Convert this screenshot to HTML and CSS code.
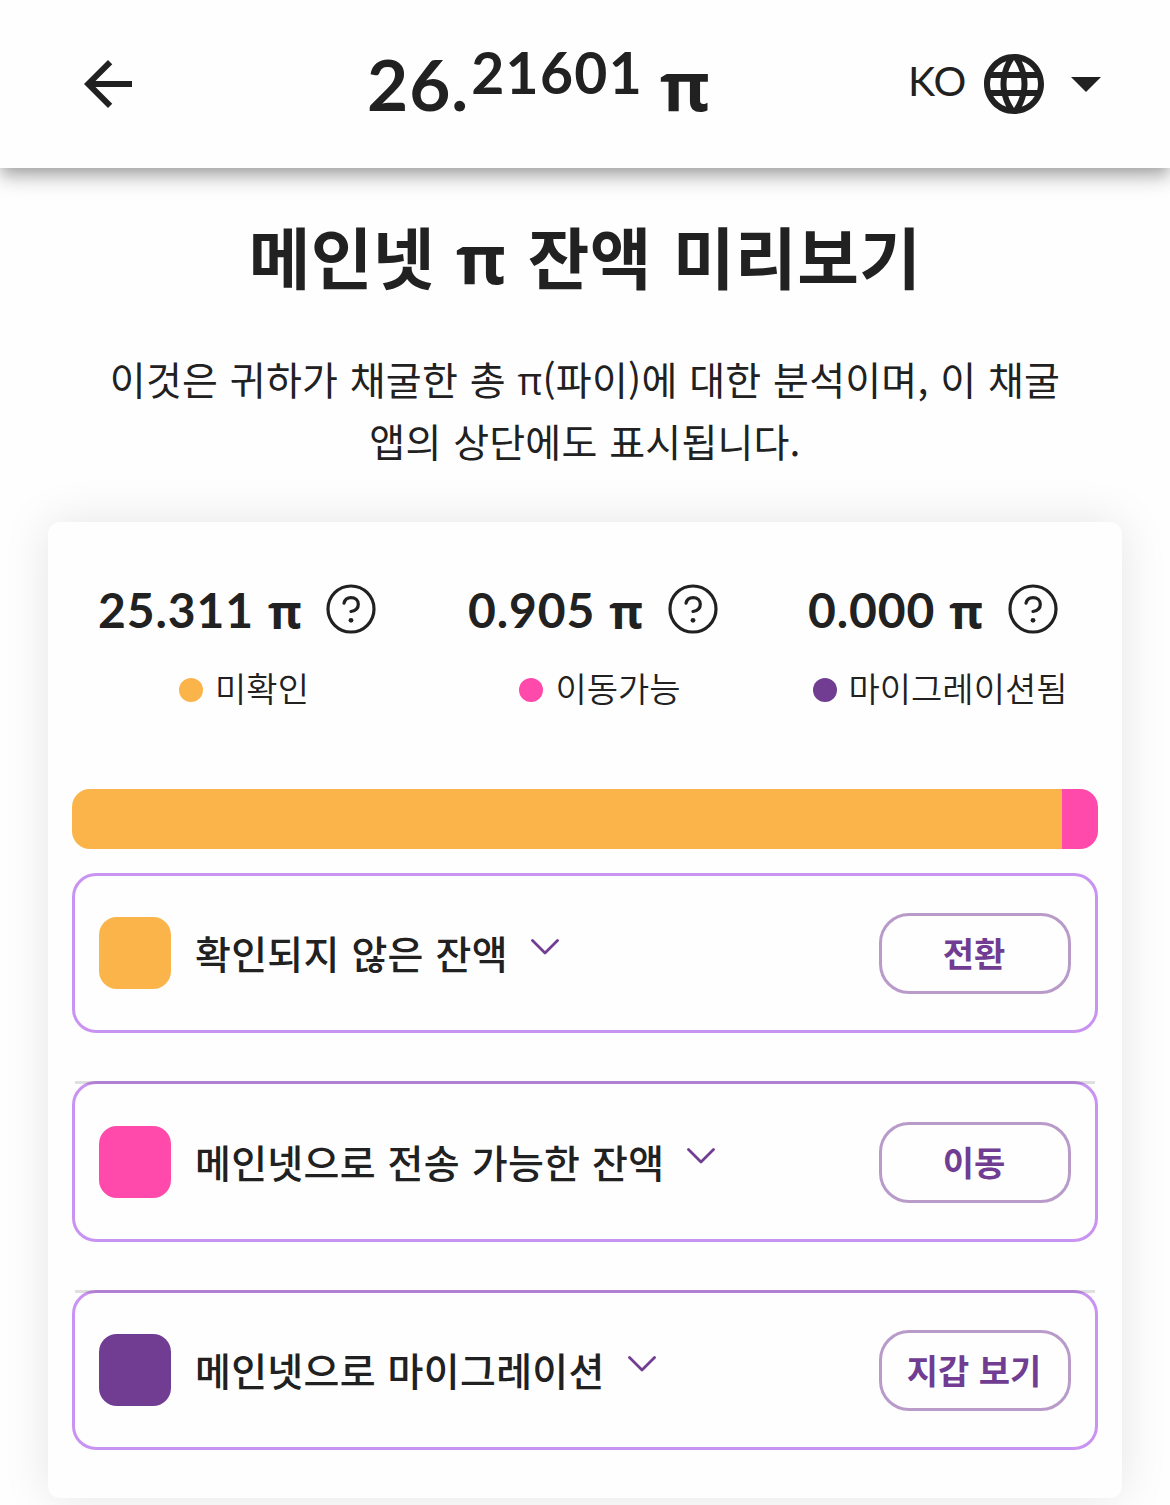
FILE: index.html
```
<!DOCTYPE html>
<html lang="ko">

<head>
    <meta charset="UTF-8">
    <meta name="viewport" content="width=device-width, initial-scale=1.0">
    <title>메인넷 π 잔액 미리보기</title>
    <link rel="stylesheet" href="styles.css">
</head>

<body>
    <header class="header">
        <svg class="back" viewBox="4 4 16 16">
            <path d="M20 11H7.83l5.59-5.59L12 4l-8 8 8 8 1.41-1.41L7.83 13H20v-2z" />
        </svg>
        <div class="balance">
            <span class="int">26.</span><span class="dec">21601</span><span class="pi">π</span>
        </div>
        <div class="lang">
            <span class="lang-name">KO</span>
            <svg class="globe" viewBox="2 2 20 20">
                <path d="M11.99 2C6.47 2 2 6.48 2 12s4.47 10 9.99 10C17.52 22 22 17.52 22 12S17.52 2 11.99 2zm6.93 6h-2.95c-.32-1.25-.78-2.45-1.38-3.56 1.84.63 3.37 1.91 4.33 3.56zM12 4.04c.83 1.2 1.48 2.53 1.91 3.96h-3.82c.43-1.43 1.08-2.76 1.91-3.96zM4.26 14C4.1 13.36 4 12.69 4 12s.1-1.36.26-2h3.38c-.08.66-.14 1.32-.14 2s.06 1.34.14 2H4.26zm.82 2h2.95c.32 1.25.78 2.45 1.38 3.56-1.84-.63-3.37-1.9-4.33-3.56zm2.95-8H5.08c.96-1.66 2.49-2.93 4.33-3.56C8.81 5.55 8.35 6.75 8.03 8zM12 19.96c-.83-1.2-1.48-2.53-1.91-3.96h3.82c-.43 1.43-1.08 2.76-1.91 3.96zM14.34 14H9.66c-.09-.66-.16-1.32-.16-2s.07-1.35.16-2h4.68c.09.65.16 1.32.16 2s-.07 1.34-.16 2zm.25 5.56c.6-1.11 1.06-2.31 1.38-3.56h2.95c-.96 1.65-2.49 2.93-4.33 3.56zM16.36 14c.08-.66.14-1.32.14-2s-.06-1.34-.14-2h3.38c.16.64.26 1.31.26 2s-.1 1.36-.26 2h-3.38z" />
            </svg>
            <svg class="caret" viewBox="0 0 10 5">
                <path d="M0 0l5 5 5-5z" />
            </svg>
        </div>
    </header>

    <main class="main">
        <h1 class="title">메인넷 <span class="pi">π</span> 잔액 미리보기</h1>
        <p class="desc">
            <span class="line1">이것은 귀하가 채굴한 총 <span class="pi">π</span>(파이)에 대한 분석이며, 이 채굴</span><br>
            <span class="line2">앱의 상단에도 표시됩니다.</span>
        </p>

        <section class="card">
            <div class="stats">
                <div class="stat">
                    <div class="value">
                        <span class="num">25.311</span><span class="pi">π</span>
                        <svg class="help" viewBox="0 0 50 50">
                            <circle cx="25" cy="25" r="23" />
                            <path d="M18 19.2C18.8 15.6 21.5 13.6 25 13.6c4.4 0 7.3 2.9 7.3 6.7 0 4-3 6.5-7.3 7.2" />
                            <circle class="dot" cx="25" cy="36.3" r="2.4" />
                        </svg>
                    </div>
                    <div class="legend"><i class="bullet orange"></i>미확인</div>
                </div>
                <div class="stat">
                    <div class="value">
                        <span class="num">0.905</span><span class="pi">π</span>
                        <svg class="help" viewBox="0 0 50 50">
                            <circle cx="25" cy="25" r="23" />
                            <path d="M18 19.2C18.8 15.6 21.5 13.6 25 13.6c4.4 0 7.3 2.9 7.3 6.7 0 4-3 6.5-7.3 7.2" />
                            <circle class="dot" cx="25" cy="36.3" r="2.4" />
                        </svg>
                    </div>
                    <div class="legend"><i class="bullet pink"></i>이동가능</div>
                </div>
                <div class="stat">
                    <div class="value">
                        <span class="num">0.000</span><span class="pi">π</span>
                        <svg class="help" viewBox="0 0 50 50">
                            <circle cx="25" cy="25" r="23" />
                            <path d="M18 19.2C18.8 15.6 21.5 13.6 25 13.6c4.4 0 7.3 2.9 7.3 6.7 0 4-3 6.5-7.3 7.2" />
                            <circle class="dot" cx="25" cy="36.3" r="2.4" />
                        </svg>
                    </div>
                    <div class="legend"><i class="bullet purple"></i>마이그레이션됨</div>
                </div>
            </div>

            <div class="bar">
                <div class="part orange" style="width: 96.53%"></div>
                <div class="part pink" style="width: 3.47%"></div>
            </div>

            <div class="row">
                <i class="square orange"></i>
                <span class="name">확인되지 않은 잔액</span>
                <svg class="chevron" viewBox="0 0 28 16">
                    <path d="M1.5 1.5L14 14 26.5 1.5" />
                </svg>
                <button class="btn">전환</button>
            </div>
            <div class="row">
                <i class="square pink"></i>
                <span class="name">메인넷으로 전송 가능한 잔액</span>
                <svg class="chevron" viewBox="0 0 28 16">
                    <path d="M1.5 1.5L14 14 26.5 1.5" />
                </svg>
                <button class="btn">이동</button>
            </div>
            <div class="row">
                <i class="square purple"></i>
                <span class="name">메인넷으로 마이그레이션</span>
                <svg class="chevron" viewBox="0 0 28 16">
                    <path d="M1.5 1.5L14 14 26.5 1.5" />
                </svg>
                <button class="btn">지갑 보기</button>
            </div>
        </section>
    </main>
</body>

</html>
```
FILE: styles.css
```
* {
    box-sizing: border-box;
    margin: 0;
    padding: 0;
}

body {
    height: 1505px;
    overflow: hidden;
    background: #fefefe;
    color: #212121;
    font-family: "Noto Sans CJK KR", sans-serif;
}

svg {
    display: block;
    flex: none;
}

.orange {
    background: #fbb44a;
}

.pink {
    background: #ff4aab;
}

.purple {
    background: #703d92;
}

.pi {
    font-family: "Open Sans", sans-serif;
}

/* 상단 바 */
.header {
    position: relative;
    display: flex;
    align-items: center;
    justify-content: space-between;
    height: 168px;
    padding: 0 69px 0 84px;
    background: #fefefe;
    box-shadow: 0 6px 12px -3px rgba(0, 0, 0, 0.2), 0 12px 15px 0 rgba(0, 0, 0, 0.14), 0 3px 30px 0 rgba(0, 0, 0, 0.12);
}

.back {
    width: 48px;
    height: 48px;
    fill: #212121;
}

.balance {
    display: flex;
    align-items: baseline;
    width: 340px;
    margin-left: 34px;
    font-family: Lato, sans-serif;
    font-size: 71px;
    font-weight: 700;
    line-height: 80px;
    white-space: nowrap;
}

.int {
    letter-spacing: 1px;
}

.dec {
    margin-left: 2px;
    font-size: 57px;
    letter-spacing: 1.3px;
    line-height: 1;
    position: relative;
    top: -17px;
}

.balance .pi {
    margin-left: 17px;
    font-size: 68px;
    line-height: 1;
}

.lang {
    display: flex;
    align-items: center;
}

.lang-name {
    width: 76px;
    font-family: Lato, sans-serif;
    font-size: 41px;
    line-height: 50px;
    padding-bottom: 6px;
}

.globe {
    width: 60px;
    height: 60px;
    fill: #212121;
}

.caret {
    width: 30px;
    height: 15px;
    margin-left: 27px;
    fill: #212121;
}

/* 본문 */
.main {
    padding: 39px 48px 0;
}

.title {
    height: 96px;
    font-size: 67px;
    font-weight: 700;
    line-height: 96px;
    letter-spacing: 0.4px;
    word-spacing: 2px;
    text-align: center;
    white-space: nowrap;
}

.title .pi {
    font-size: 68px;
    line-height: 1;
}

.desc {
    height: 124px;
    margin-top: 44px;
    font-size: 39px;
    line-height: 62px;
    letter-spacing: 0.2px;
    word-spacing: 0.6px;
    text-align: center;
    white-space: nowrap;
}

.desc .pi {
    font-size: 38px;
    font-weight: 500;
    line-height: 1;
}

.card {
    height: 976px;
    margin-top: 51px;
    padding: 60px 24px 0;
    border-radius: 12px;
    background: #fefefe;
    box-shadow: 0 0 48px rgba(0, 0, 0, 0.1);
}

.stats {
    display: grid;
    grid-template-columns: 292px 264px 264px;
    column-gap: 76px;
    height: 207px;
    padding-left: 26px;
}

.stat + .stat {
    padding-left: 2px;
    margin-right: -2px;
}

.value {
    display: flex;
    align-items: center;
    height: 54px;
    padding-right: 14px;
    font-size: 48px;
    font-weight: 700;
    line-height: 54px;
}

.num {
    font-family: Lato, sans-serif;
    letter-spacing: 0.9px;
    padding-top: 2px;
}

.value .pi {
    margin-left: 14px;
    padding-top: 3px;
    font-size: 46px;
}

.help {
    width: 50px;
    height: 50px;
    margin-left: auto;
    fill: none;
    stroke: #212121;
    stroke-width: 3.2;
    stroke-linecap: round;
}

.help .dot {
    fill: #212121;
    stroke: none;
}

.legend {
    display: flex;
    align-items: center;
    justify-content: center;
    gap: 12px;
    height: 50px;
    margin-top: 26px;
    font-size: 34px;
    font-weight: 350;
    white-space: nowrap;
}

.bullet {
    flex: none;
    width: 24px;
    height: 24px;
    margin-top: 6px;
    border-radius: 50%;
}

.bar {
    display: flex;
    height: 60px;
    border-radius: 18px;
    overflow: hidden;
}

.row {
    position: relative;
    display: flex;
    align-items: center;
    height: 160px;
    margin-top: 24px;
    padding: 0 24px;
    border: 3px solid #c993f1;
    border-radius: 24px;
}

.row + .row {
    height: 161px;
    margin-top: 48px;
    padding-top: 1px;
}

.row + .row + .row {
    height: 160px;
    padding-top: 0;
}

/* 항목 사이 구분선 */
.row + .row::before {
    content: "";
    position: absolute;
    top: -3px;
    left: 0;
    right: 0;
    height: 3px;
    background: rgba(0, 0, 0, 0.12);
}

.square {
    flex: none;
    width: 72px;
    height: 72px;
    border-radius: 18px;
}

.name {
    margin-left: 24px;
    padding-bottom: 2px;
    font-size: 39px;
    font-weight: 500;
    line-height: 60px;
    letter-spacing: 0.3px;
    word-spacing: 0.5px;
    white-space: nowrap;
}

.chevron {
    width: 28px;
    height: 16px;
    margin: 0 0 12px 23px;
    fill: none;
    stroke: #703d92;
    stroke-width: 2.8;
    stroke-linecap: round;
    stroke-linejoin: round;
}

.btn {
    width: 192px;
    height: 81px;
    margin-left: auto;
    padding: 0 2px 2px 0;
    border: 3px solid #b89bc8;
    border-radius: 30px;
    background: none;
    color: #703d92;
    font-family: inherit;
    font-size: 34px;
    font-weight: 700;
    white-space: nowrap;
}
```
